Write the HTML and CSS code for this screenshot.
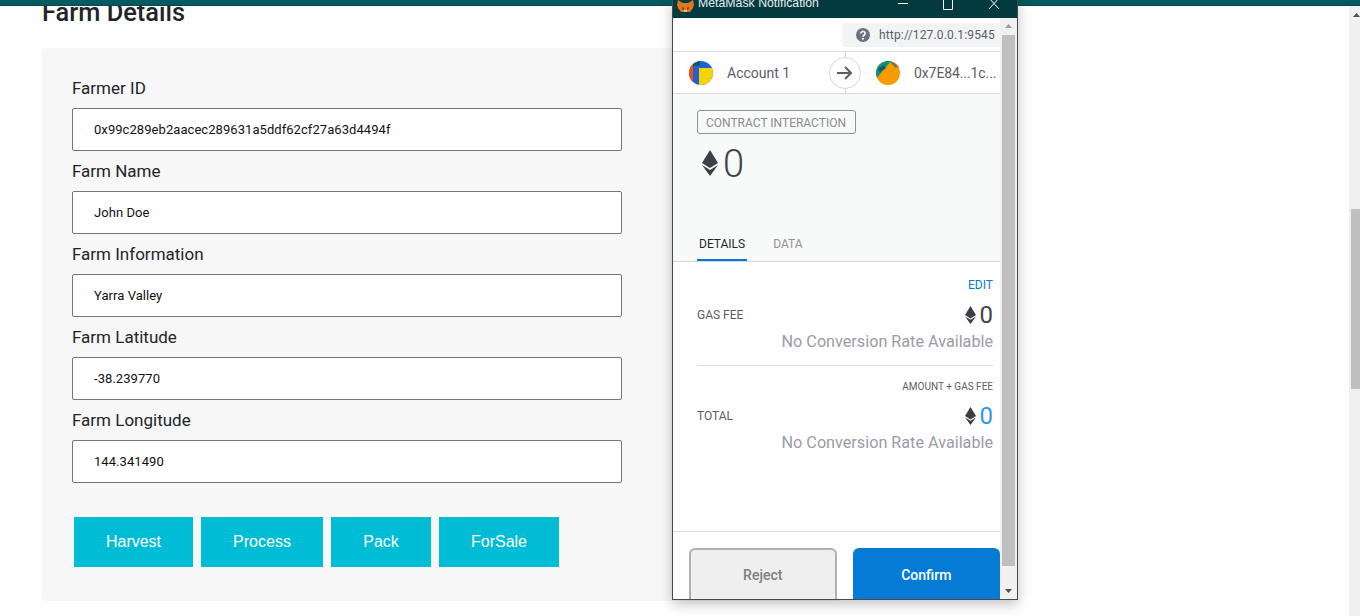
FILE: index.html
```html
<!DOCTYPE html>
<html lang="en">
<head>
<meta charset="utf-8">
<title>Farm Details</title>
<link rel="stylesheet" href="styles.css">
</head>
<body>
<div class="topbar"></div>
<div class="viewport">
  <main class="page">
    <h2 class="title">Farm Details</h2>
    <section class="panel">
      <div class="field"><label class="label">Farmer ID</label><div class="input">0x99c289eb2aacec289631a5ddf62cf27a63d4494f</div></div>
      <div class="field"><label class="label">Farm Name</label><div class="input">John Doe</div></div>
      <div class="field"><label class="label">Farm Information</label><div class="input">Yarra Valley</div></div>
      <div class="field"><label class="label">Farm Latitude</label><div class="input">-38.239770</div></div>
      <div class="field"><label class="label">Farm Longitude</label><div class="input">144.341490</div></div>
      <div class="actions">
        <button class="act w-harvest">Harvest</button>
        <button class="act w-process">Process</button>
        <button class="act w-pack">Pack</button>
        <button class="act w-sale">ForSale</button>
      </div>
    </section>
  </main>
  <div class="pagebar">
    <svg class="pagearrow" width="7" height="4" viewBox="0 0 7 4"><path d="M3.5 0L7 4H0z" fill="#505050"/></svg>
    <div class="pagethumb"></div>
  </div>
</div>

<div class="popup">
  <div class="titlebar">
    <svg class="fox" width="17" height="12" viewBox="0 0 17 12"><path d="M1 0l5 3h5l5-3 1 5-1 3-3 4H4L1 8 0 5z" fill="#e2761b"/><path d="M5 7l2 1-1 2zM12 7l-2 1 1 2z" fill="#3a2a1a"/><path d="M7 10h3v2H7z" fill="#d7c1b3"/></svg>
    <span class="wintitle">MetaMask Notification</span>
    <div class="winbtns">
      <svg width="10" height="10" viewBox="0 0 10 10"><path d="M0 3.5h10" stroke="#fff"/></svg>
      <svg width="10" height="10" viewBox="0 0 10 10"><path d="M.5-3v12.5h9V-3" fill="none" stroke="#fff"/></svg>
      <svg width="12" height="10" viewBox="0 0 12 10"><path d="M1 -2l10 11M11 -2L1 9" stroke="#fff" fill="none"/></svg>
    </div>
  </div>
  <div class="winbody">
    <div class="content">
      <div class="originrow">
        <div class="origin">
          <svg class="help" width="14" height="14" viewBox="0 0 14 14"><circle cx="7" cy="7" r="7" fill="#6a737d"/><path d="M4.9 5.4a2.1 2 0 1 1 3.2 1.7c-.7.5-1.1.8-1.1 1.6" fill="none" stroke="#fff" stroke-width="1.6"/><circle cx="7" cy="10.8" r="1" fill="#fff"/></svg>
          <span>http://127.0.0.1:9545</span>
        </div>
      </div>
      <div class="accounts">
        <div class="acct from">
          <svg class="ident" width="24" height="24" viewBox="0 0 24 24"><defs><clipPath id="c1"><circle cx="12" cy="12" r="12"/></clipPath></defs><g clip-path="url(#c1)"><rect width="24" height="24" fill="#1f5fd8"/><rect width="4" height="24" fill="#f0500f"/><rect x="10" y="7" width="14" height="17" fill="#f5d500"/><path d="M4 0h7v5H4z" fill="#0a5c66"/></g></svg>
          <span>Account 1</span>
        </div>
        <div class="arrowwrap">
          <span class="arrowcircle"><svg width="16" height="14" viewBox="0 0 16 14"><path d="M0 7h14M8 1l6 6-6 6" fill="none" stroke="#5b5d67" stroke-width="2"/></svg></span>
        </div>
        <div class="acct to">
          <svg class="ident" width="24" height="24" viewBox="0 0 24 24"><defs><clipPath id="c2"><circle cx="12" cy="12" r="12"/></clipPath></defs><g clip-path="url(#c2)"><rect width="24" height="24" fill="#f79b00"/><path d="M0 0h15L0 18z" fill="#0f8f7f"/><path d="M15 0h9v8z" fill="#f2330d"/><path d="M13 0h2l6 6-1 1z" fill="#0f8f7f"/><path d="M2 8l6-4 2 3-6 4z" fill="#0b5f6b"/></g></svg>
          <span>0x7E84...1c...</span>
        </div>
      </div>
      <div class="summary">
        <span class="tag">CONTRACT INTERACTION</span>
        <div class="amount">
          <svg class="eth" width="16" height="26" viewBox="0 0 16 26"><path d="M8 0l8 13-8 5-8-5z" fill="#3c3f45"/><path d="M0 15l8 5 8-5-8 11z" fill="#3c3f45"/></svg>
          <span>0</span>
        </div>
      </div>
      <div class="tabs">
        <span class="tab on">DETAILS</span>
        <span class="tab">DATA</span>
      </div>
      <div class="details">
        <div class="edit">EDIT</div>
        <div class="row">
          <span class="rowlabel">GAS FEE</span>
          <span class="val"><svg width="11" height="18" viewBox="0 0 16 26"><path d="M8 0l8 13-8 5-8-5z" fill="#3c3f45"/><path d="M0 15l8 5 8-5-8 11z" fill="#3c3f45"/></svg>0</span>
        </div>
        <div class="norate">No Conversion Rate Available</div>
        <div class="sep"></div>
        <div class="hint">AMOUNT + GAS FEE</div>
        <div class="row">
          <span class="rowlabel">TOTAL</span>
          <span class="val blue"><svg width="11" height="18" viewBox="0 0 16 26"><path d="M8 0l8 13-8 5-8-5z" fill="#3c3f45"/><path d="M0 15l8 5 8-5-8 11z" fill="#3c3f45"/></svg>0</span>
        </div>
        <div class="norate">No Conversion Rate Available</div>
      </div>
      <div class="footer">
        <button class="btn reject">Reject</button>
        <button class="btn confirm">Confirm</button>
      </div>
    </div>
    <div class="winbar">
      <svg width="7" height="4" viewBox="0 0 7 4"><path d="M3.5 0L7 4H0z" fill="#a0a0a0"/></svg>
      <div class="winthumb"></div>
      <svg width="7" height="4" viewBox="0 0 7 4"><path d="M0 0h7L3.5 4z" fill="#505050"/></svg>
    </div>
  </div>
</div>
</body>
</html>
```
FILE: styles.css
```css
* { box-sizing: border-box; }
html, body { margin: 0; height: 616px; overflow: hidden; background: #fff; }
body { font-family: Roboto, "Liberation Sans", sans-serif; color: #212529; position: relative; }
.topbar { height: 6px; background: #045a60; border-bottom: 1px solid #04484d; position: relative; z-index: 1; }
.viewport { display: flex; height: 610px; }
.page { flex: 1; padding-left: 42px; overflow: hidden; }
.title { margin: -11px 0 18px; font-size: 25.4px; line-height: 35px; font-weight: 500; color: #212529; }
.panel { width: 800px; height: 553px; background: #f7f7f7; border-radius: 4px; padding: 28px 30px 0; }
.field { display: flex; flex-direction: column; }
.label { font-size: 17px; line-height: 24px; height: 32px; color: #212529; }
.input { width: 550px; height: 43px; background: #fff; border: 1px solid #757575; border-radius: 2px; padding: 0 21px; font-size: 13px; letter-spacing: .06px; line-height: 41px; color: #111; margin-bottom: 8px; }
.actions { display: flex; gap: 8px; margin: 26px 0 0 2px; }
.act { height: 50px; border: 0; background: #00bcd4; color: #fff; font: 16px/50px "Liberation Sans", Arial, sans-serif; padding: 0; }
.w-harvest { width: 119px; }
.w-process { width: 122px; }
.w-pack { width: 100px; }
.w-sale { width: 120px; }
.pagebar { width: 11px; background: #f0f0f0; position: relative; display: flex; flex-direction: column; align-items: flex-end; }
.pagearrow { margin: 7px 0 0; }
.pagethumb { position: absolute; top: 203px; right: 0; width: 9px; height: 180px; background: #bfbfbf; }

.popup { position: absolute; z-index: 2; left: 672px; top: 0; width: 346px; height: 600px; border: 1px solid #4a4a4a; border-top: 0; box-shadow: 0 4px 12px rgba(0,0,0,.25); background: #fff; display: flex; flex-direction: column; overflow: hidden; }
.titlebar { flex: none; height: 18px; background: #033a40; color: #fff; display: flex; align-items: center; position: relative; overflow: hidden; padding-left: 4px; }
.fox { margin-top: -6px; flex: none; }
.wintitle { font: 12.3px/12px "Liberation Sans", Arial, sans-serif; margin: -13px 0 0 4px; color: #e6eeee; }
.winbtns { margin-left: auto; display: flex; gap: 35px; padding-right: 17px; margin-top: -9px; }
.winbody { flex: 1; display: flex; min-height: 0; }
.content { width: 327px; display: flex; flex-direction: column; background: #fff; overflow: hidden; }
.originrow { height: 33px; padding-top: 5px; display: flex; justify-content: flex-end; flex: none; }
.origin { width: 158px; height: 24px; background: #f2f3f4; border-radius: 4px 0 0 4px; display: flex; align-items: center; padding-left: 14px; gap: 9px; font-size: 12px; letter-spacing: .16px; color: #5b5d67; }
.accounts { flex: none; height: 43px; border-top: 1px solid #d9dadb; border-bottom: 1px solid #d9dadb; display: flex; align-items: center; position: relative; font-size: 14px; color: #5b5d67; }
.acct { display: flex; align-items: center; gap: 14px; }
.from { width: 156px; padding-left: 16px; }
.to { padding-left: 15px; gap: 14px; letter-spacing: -.1px; white-space: nowrap; }
.arrowwrap { width: 32px; height: 41px; display: flex; align-items: center; justify-content: center; position: relative; background: linear-gradient(#d9dadb,#d9dadb) center / 1px 100% no-repeat; }
.arrowcircle { width: 32px; height: 32px; border-radius: 50%; border: 1px solid #d2d8dd; background: #fff; display: flex; align-items: center; justify-content: center; }
.summary { flex: none; height: 124px; background: #f8f9f9; padding: 16px 24px 0; display: flex; flex-direction: column; align-items: flex-start; }
.tag { height: 24px; border: 1px solid #8f9296; border-radius: 3px; padding: 0 9px 0 8px; font-size: 12px; line-height: 24px; color: #8a8d91; white-space: nowrap; }
.amount { display: flex; align-items: center; gap: 5px; margin-top: 10px; padding-left: 5px; font-size: 38px; line-height: 40px; color: #414449; font-weight: 300; }
.eth { margin-top: -2px; }
.tabs { flex: none; height: 44px; background: #f8f9f9; border-bottom: 1px solid #d2d8dd; padding-left: 24px; display: flex; gap: 24px; }
.tab { font-size: 12px; line-height: 16px; padding: 18px 2px 0; color: #8f9296; height: 44px; font-weight: 400; }
.tab.on { color: #24272a; border-bottom: 2px solid #0678d6; height: 43px; }
.details { flex: 1; padding: 15px 7px 0 24px; color: #5b5d67; }
.edit { font-size: 12px; line-height: 16px; text-align: right; color: #037dd6; }
.row { display: flex; justify-content: space-between; align-items: center; height: 24px; margin-top: 10px; }
.rowlabel { font-size: 12px; color: #5b5d67; }
.val { display: flex; align-items: center; gap: 4px; font-size: 24px; line-height: 24px; color: #414449; }
.val.blue { color: #2f9ae0; }
.norate { font-size: 16.2px; line-height: 22px; text-align: right; color: #9a9ca6; margin-top: 4px; }
.sep { height: 1px; background: #d9dadb; margin-top: 12px; }
.hint { font-size: 10px; line-height: 15px; text-align: right; color: #5b5d67; margin-top: 13px; }
.footer { flex: none; height: 68px; border-top: 1px solid #d9dadb; padding: 16px 0 0 16px; display: flex; gap: 16px; }
.btn { width: 148px; height: 60px; border-radius: 6px; font: 500 14px Roboto, sans-serif; padding: 0 0 6px; }
.reject { background: #efefef; border: 2px solid #b0b0b0; color: #7e7e7e; }
.confirm { background: #057bd6; border: 0; color: #fff; }
.winbar { flex: 1; background: #f0f0f0; display: flex; flex-direction: column; align-items: center; justify-content: space-between; padding: 6px 0; position: relative; }
.winthumb { position: absolute; top: 17px; left: 2px; right: 2px; height: 531px; background: #bfbfbf; }
```
